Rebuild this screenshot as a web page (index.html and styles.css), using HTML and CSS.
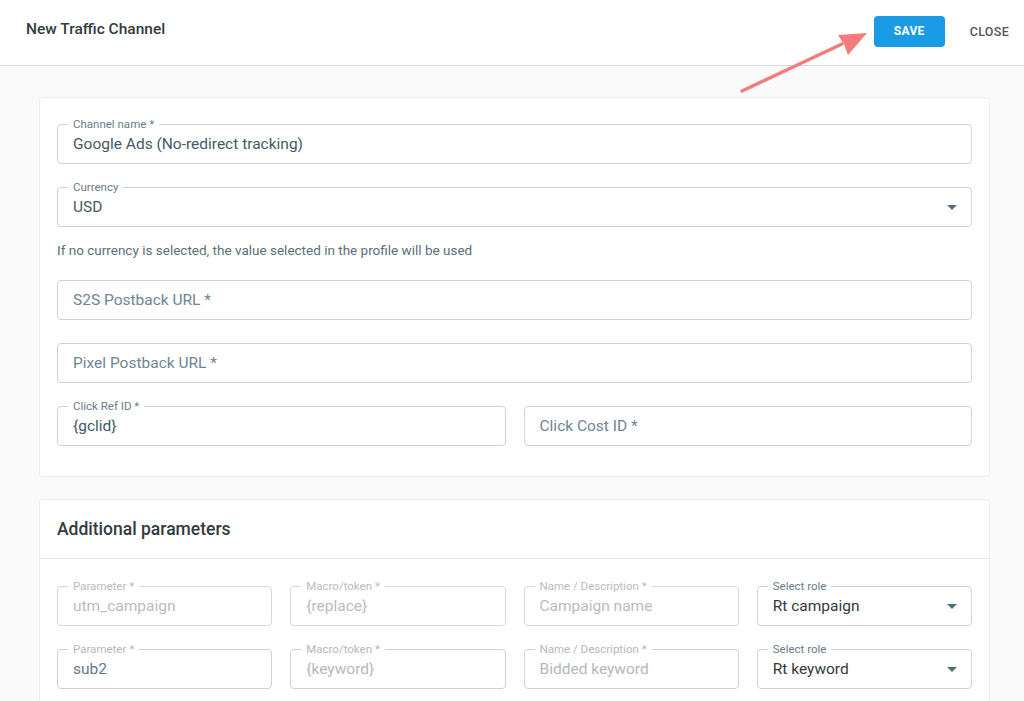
FILE: index.html
```html
<!DOCTYPE html>
<html lang="en">
<head>
  <meta charset="UTF-8" />
  <meta name="viewport" content="width=device-width, initial-scale=1.0"/>
  <title>New Traffic Channel</title>
  <link rel="stylesheet" href="styles.css">
</head>
<body>
  <header class="topbar">
    <h1 class="title">New Traffic Channel</h1>
    <div class="actions">
      <button class="btn-save">SAVE</button>
      <button class="btn-close">CLOSE</button>
    </div>
    <svg class="pointer" width="150" height="80" viewBox="0 0 150 80">
      <line x1="12" y1="71" x2="112" y2="24" stroke="#f47c7c" stroke-width="3.5" stroke-linecap="round"/>
      <polygon points="137,13 108,15 114,24 118,35" fill="#f47c7c"/>
    </svg>
  </header>

  <main class="content">
    <section class="card card-main">
      <div class="field">
        <span class="legend">Channel name *</span>
        <div class="value">Google Ads (No-redirect tracking)</div>
      </div>

      <div class="field select">
        <span class="legend">Currency</span>
        <div class="value">USD</div>
        <span class="caret"></span>
      </div>
      <p class="hint">If no currency is selected, the value selected in the profile will be used</p>

      <div class="field">
        <div class="value placeholder">S2S Postback URL *</div>
      </div>

      <div class="field">
        <div class="value placeholder">Pixel Postback URL *</div>
      </div>

      <div class="row row-2">
        <div class="field">
          <span class="legend">Click Ref ID *</span>
          <div class="value">{gclid}</div>
        </div>
        <div class="field">
          <div class="value placeholder">Click Cost ID *</div>
        </div>
      </div>
    </section>

    <section class="card card-params">
      <h2 class="card-title">Additional parameters</h2>
      <div class="params">
        <div class="row row-4">
          <div class="field muted">
            <span class="legend">Parameter *</span>
            <div class="value">utm_campaign</div>
          </div>
          <div class="field muted">
            <span class="legend">Macro/token *</span>
            <div class="value">{replace}</div>
          </div>
          <div class="field muted">
            <span class="legend">Name / Description *</span>
            <div class="value">Campaign name</div>
          </div>
          <div class="field select">
            <span class="legend">Select role</span>
            <div class="value dark">Rt campaign</div>
            <span class="caret"></span>
          </div>
        </div>
        <div class="row row-4">
          <div class="field">
            <span class="legend light">Parameter *</span>
            <div class="value slate">sub2</div>
          </div>
          <div class="field">
            <span class="legend light">Macro/token *</span>
            <div class="value ghost">{keyword}</div>
          </div>
          <div class="field">
            <span class="legend light">Name / Description *</span>
            <div class="value ghost">Bidded keyword</div>
          </div>
          <div class="field select">
            <span class="legend">Select role</span>
            <div class="value dark">Rt keyword</div>
            <span class="caret"></span>
          </div>
        </div>
      </div>
    </section>
  </main>
</body>
</html>
```

FILE: styles.css
```css
* {
  box-sizing: border-box;
}
body {
  margin: 0;
  font-family: Roboto, "Liberation Sans", Arial, sans-serif;
  background: #fafafa;
  color: #37474f;
  overflow: hidden;
}
.topbar {
  position: relative;
  height: 66px;
  background: #fff;
  border-bottom: 1px solid #dcdcdc;
  display: flex;
  align-items: center;
  justify-content: space-between;
  padding: 0 15px 0 26px;
}
.title {
  margin: 0 0 7px;
  font-size: 15.5px;
  font-weight: 500;
  color: #333b40;
}
.actions {
  display: flex;
  align-items: center;
  gap: 25px;
  margin-bottom: 3px;
}
.btn-save {
  width: 71px;
  height: 31px;
  border: none;
  border-radius: 4px;
  background: #1a9be6;
  color: #fff;
  font-family: inherit;
  font-size: 12px;
  font-weight: 700;
  letter-spacing: 0.3px;
  cursor: pointer;
}
.btn-close {
  border: none;
  background: none;
  padding: 0;
  font-family: inherit;
  font-size: 12.5px;
  font-weight: 500;
  color: #555;
  letter-spacing: 0.3px;
  cursor: pointer;
}
.pointer {
  position: absolute;
  left: 730px;
  top: 20px;
}
.content {
  padding: 31px 34px 0 39px;
}
.card {
  background: #fff;
  border: 1px solid #ececec;
  border-radius: 4px;
  margin-bottom: 22px;
}
.card-main {
  padding: 26px 17px 30px 17px;
}
.field {
  position: relative;
  height: 40px;
  border: 1px solid #cfd2d4;
  border-radius: 4px;
  margin-bottom: 23px;
  display: flex;
  align-items: center;
  padding: 0 15px;
}
.legend {
  position: absolute;
  top: -8px;
  left: 10px;
  padding: 0 5px;
  background: #fff;
  font-size: 11.5px;
  line-height: 14px;
  color: #6b7c85;
}
.value {
  font-size: 15.5px;
  color: #455a64;
  white-space: nowrap;
}
.value.placeholder {
  color: #6f8591;
}
.value.dark {
  color: #333a3f;
}
.value.slate {
  color: #5f7a88;
}
.value.ghost {
  color: #b5b8ba;
}
.legend.light {
  color: #b5b8ba;
}
.field.muted .legend,
.field.muted .value {
  color: #b9bcbe;
}
.field.muted {
  border-color: #d6d8d9;
}
.caret {
  position: absolute;
  right: 14px;
  top: 17px;
  width: 0;
  height: 0;
  border-left: 5px solid transparent;
  border-right: 5px solid transparent;
  border-top: 5px solid #546e7a;
}
.hint {
  margin: -9px 0 21px;
  font-size: 13.5px;
  line-height: 18px;
  color: #5b6f79;
}
.row {
  display: grid;
  gap: 18px;
}
.row .field {
  margin-bottom: 0;
}
.row-2 {
  grid-template-columns: 1fr 1fr;
}
.row-4 {
  grid-template-columns: repeat(4, 1fr);
}
.card-title {
  margin: 0;
  height: 59px;
  display: flex;
  align-items: center;
  padding: 0 17px;
  border-bottom: 1px solid #e6e6e6;
  font-size: 17.5px;
  font-weight: 500;
  color: #333b40;
}
.params {
  padding: 27px 17px 30px;
  display: flex;
  flex-direction: column;
  gap: 23px;
}
```
